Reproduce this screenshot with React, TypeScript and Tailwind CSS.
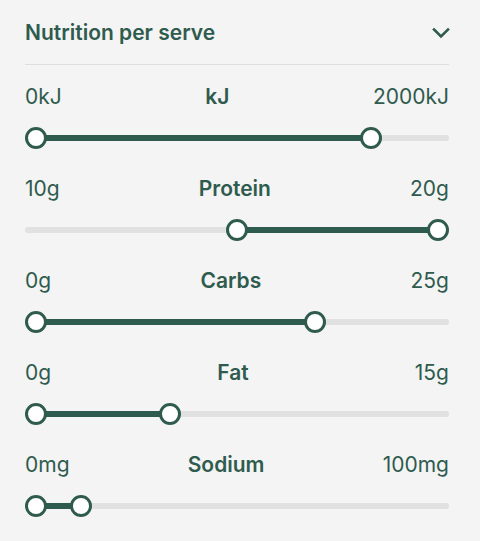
import React from 'react';

const GREEN = '#2f5b4e';

interface RangeRow {
  label: string;
  min: string;
  max: string;
  from: number;
  to: number;
}

const rows: RangeRow[] = [
  { label: 'kJ', min: '0kJ', max: '2000kJ', from: 0, to: 0.833 },
  { label: 'Protein', min: '10g', max: '20g', from: 0.5, to: 1 },
  { label: 'Carbs', min: '0g', max: '25g', from: 0, to: 0.693 },
  { label: 'Fat', min: '0g', max: '15g', from: 0, to: 0.334 },
  { label: 'Sodium', min: '0mg', max: '100mg', from: 0, to: 0.112 },
];

// usable travel of the thumbs: track width minus one thumb
const TRAVEL = 424 - 22;

function Thumb() {
  return <div className="relative z-10 h-[22px] w-[22px] shrink-0 rounded-full border-[3px] border-[#2f5b4e] bg-white" />;
}

function RangeSlider({ row }: { row: RangeRow }) {
  return (
    <div className="pt-[20px] pb-[8px]">
      <div className="flex h-[22px] items-center justify-between text-[21px] leading-none">
        <span className="font-normal">{row.min}</span>
        <span className="font-semibold">{row.label}</span>
        <span className="font-normal">{row.max}</span>
      </div>
      {/* track is split into segments so the thumbs sit in the flow */}
      <div className="mt-[20px] flex h-[22px] items-center">
        <div className="-mr-[11px] h-[6px] shrink-0 rounded-l-full bg-[#e1e1e1]" style={{ width: row.from * TRAVEL + 11 }} />
        <Thumb />
        <div className="-mx-[11px] h-[6px] shrink-0 bg-[#2f5b4e]" style={{ width: (row.to - row.from) * TRAVEL }} />
        <Thumb />
        <div className="-ml-[11px] h-[6px] flex-1 rounded-r-full bg-[#e1e1e1]" />
      </div>
    </div>
  );
}

export default function App() {
  return (
    <div
      className="min-h-[541px] w-[480px] bg-[#f4f4f4] text-[#2f5b4e]"
      style={{ fontFamily: 'Inter, "Noto Sans", sans-serif' }}
    >
      <div className="ml-[25px] w-[424px]">
        <div className="flex h-[65px] items-center justify-between border-b border-[#dcdfde] pt-[2px]">
          <span className="text-[21px] font-semibold">Nutrition per serve</span>
          <svg width="18" height="12" viewBox="0 0 18 12" fill="none" className="mr-[-1px]">
            <path d="M2 2.5 L9 9.5 L16 2.5" stroke={GREEN} strokeWidth="2.6" strokeLinecap="square" />
          </svg>
        </div>
        {rows.map((row) => (
          <RangeSlider key={row.label} row={row} />
        ))}
      </div>
    </div>
  );
}
